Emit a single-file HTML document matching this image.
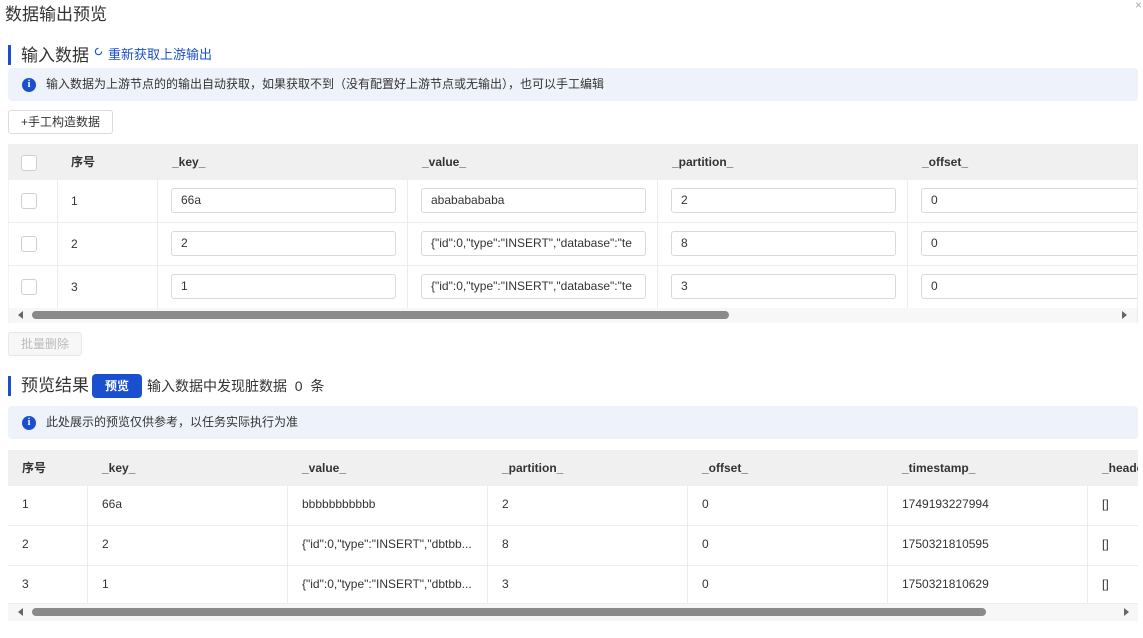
<!DOCTYPE html>
<html><head><meta charset="utf-8"><style>
*{box-sizing:border-box;margin:0;padding:0}
body{width:1143px;height:638px;overflow:hidden;background:#fff;font-family:"Liberation Sans","Noto Sans CJK SC",sans-serif;color:#333;position:relative;font-size:12px;line-height:1.2}
.a{position:absolute;white-space:nowrap;line-height:16px}
.bar{position:absolute;left:8px;width:3px;background:#1a4fd0}
.info{position:absolute;left:8px;width:1130px;height:33px;background:#eef3fb;border-radius:4px}
.info i{position:absolute;left:14px;top:10px;width:14px;height:14px;border-radius:50%;background:#1a4fd0;color:#fff;font-style:normal;font-size:10px;font-weight:bold;text-align:center;line-height:14px;font-family:"Liberation Serif",serif}
.info span{position:absolute;left:38px;top:8px;font-size:12px;line-height:16px;color:#333}
.btn{position:absolute;border:1px solid #dcdcdc;border-radius:3px;font-size:12px;text-align:center}
.th{position:absolute;background:#f0f0f0;height:36px}
.cell{position:absolute;border-right:1px solid #ececec;border-bottom:1px solid #ececec}
.inp{position:absolute;height:25px;border:1px solid #d9d9d9;border-radius:3px;padding-left:9px;line-height:23px;font-size:12px;color:#333;overflow:hidden;white-space:nowrap}
.cb{position:absolute;width:16px;height:16px;border:1px solid #cfcfcf;border-radius:3px;background:#fff}
.h{font-weight:bold;color:#333;font-size:12px}
.t{font-size:17px;line-height:20px}
</style></head><body>
<div class="a t" style="left:5px;top:5px">数据输出预览</div>
<div class="a" style="left:1135px;top:-3px;font-size:12px;color:#aaa">×</div>

<div class="bar" style="top:45px;height:20px"></div>
<div class="a t" style="left:21px;top:46px">输入数据</div>
<svg class="a" style="left:94px;top:47px" width="9" height="9" viewBox="0 0 10 10"><path d="M8.5 5A3.5 3.5 0 1 1 5 1.5" fill="none" stroke="#1a4fd0" stroke-width="1.3"/></svg>
<div class="a" style="left:108px;top:47px;font-size:13px;color:#1a4fd0">重新获取上游输出</div>
<div class="info" style="top:68px"><i>i</i><span>输入数据为上游节点的的输出自动获取，如果获取不到（没有配置好上游节点或无输出），也可以手工编辑</span></div>
<div class="btn" style="left:8px;top:110px;width:105px;height:24px;line-height:22px">+手工构造数据</div>

<!-- table 1 -->
<div class="th" style="left:8px;top:144px;width:1130px"></div>
<div class="cb" style="left:21px;top:155px"></div>
<div class="a h" style="left:71px;top:154px">序号</div>
<div class="a h" style="left:172px;top:154px">_key_</div>
<div class="a h" style="left:422px;top:154px">_value_</div>
<div class="a h" style="left:672px;top:154px">_partition_</div>
<div class="a h" style="left:922px;top:154px">_offset_</div>
<div style="position:absolute;left:8px;top:180px;width:1130px;height:143px;border-bottom:1px solid #ececec;border-left:1px solid #f3f3f3"></div>
<div class="a" style="left:1137px;top:144px;width:1px;height:179px;background:#ececec"></div>

<div style="position:absolute;left:8px;top:180px;width:1129px;height:128px;overflow:hidden">
 <div class="cell" style="left:0;top:0;width:50px;height:43px"></div><div class="cell" style="left:50px;top:0;width:100px;height:43px"></div><div class="cell" style="left:150px;top:0;width:250px;height:43px"></div><div class="cell" style="left:400px;top:0;width:250px;height:43px"></div><div class="cell" style="left:650px;top:0;width:250px;height:43px"></div><div class="cell" style="left:900px;top:0;width:250px;height:43px"></div>
 <div class="cell" style="left:0;top:43px;width:50px;height:43px"></div><div class="cell" style="left:50px;top:43px;width:100px;height:43px"></div><div class="cell" style="left:150px;top:43px;width:250px;height:43px"></div><div class="cell" style="left:400px;top:43px;width:250px;height:43px"></div><div class="cell" style="left:650px;top:43px;width:250px;height:43px"></div><div class="cell" style="left:900px;top:43px;width:250px;height:43px"></div>
 <div class="cell" style="left:0;top:86px;width:50px;height:42px;border-bottom:0"></div><div class="cell" style="left:50px;top:86px;width:100px;height:42px;border-bottom:0"></div><div class="cell" style="left:150px;top:86px;width:250px;height:42px;border-bottom:0"></div><div class="cell" style="left:400px;top:86px;width:250px;height:42px;border-bottom:0"></div><div class="cell" style="left:650px;top:86px;width:250px;height:42px;border-bottom:0"></div><div class="cell" style="left:900px;top:86px;width:250px;height:42px;border-bottom:0"></div>

 <div class="cb" style="left:13px;top:13px"></div><div class="a" style="left:63px;top:13px">1</div>
 <div class="inp" style="left:163px;top:8px;width:225px">66a</div><div class="inp" style="left:413px;top:8px;width:225px">abababababa</div><div class="inp" style="left:663px;top:8px;width:225px">2</div><div class="inp" style="left:913px;top:8px;width:240px">0</div>
 <div class="cb" style="left:13px;top:56px"></div><div class="a" style="left:63px;top:56px">2</div>
 <div class="inp" style="left:163px;top:51px;width:225px">2</div><div class="inp" style="left:413px;top:51px;width:225px">{"id":0,"type":"INSERT","database":"te</div><div class="inp" style="left:663px;top:51px;width:225px">8</div><div class="inp" style="left:913px;top:51px;width:240px">0</div>
 <div class="cb" style="left:13px;top:99px"></div><div class="a" style="left:63px;top:99px">3</div>
 <div class="inp" style="left:163px;top:94px;width:225px">1</div><div class="inp" style="left:413px;top:94px;width:225px">{"id":0,"type":"INSERT","database":"te</div><div class="inp" style="left:663px;top:94px;width:225px">3</div><div class="inp" style="left:913px;top:94px;width:240px">0</div>
</div>
<div class="a" style="left:9px;top:308px;width:1128px;height:15px;background:#f7f7f7"></div>
<div class="a" style="left:18px;top:311px;width:0;height:0;border-top:4px solid transparent;border-bottom:4px solid transparent;border-right:5px solid #666"></div>
<div class="a" style="left:32px;top:311px;width:697px;height:8px;border-radius:4px;background:#8a8a8a"></div>
<div class="a" style="left:1122px;top:311px;width:0;height:0;border-top:4px solid transparent;border-bottom:4px solid transparent;border-left:5px solid #666"></div>

<div class="btn" style="left:8px;top:332px;width:74px;height:24px;line-height:22px;color:#bbb;background:#f7f7f7;border-color:#e8e8e8">批量删除</div>

<div class="bar" style="top:376px;height:20px"></div>
<div class="a t" style="left:21px;top:376px">预览结果</div>
<div class="a" style="left:92px;top:374px;width:50px;height:24px;border-radius:4px;background:#1a4fd0;color:#fff;text-align:center;line-height:24px;font-size:12px;font-weight:bold">预览</div>
<div class="a" style="left:147px;top:377px;font-size:14px;line-height:18px">输入数据中发现脏数据&nbsp;&nbsp;0&nbsp;&nbsp;条</div>
<div class="info" style="top:406px"><i>i</i><span>此处展示的预览仅供参考，以任务实际执行为准</span></div>

<!-- table 2 -->
<div class="th" style="left:8px;top:450px;width:1130px"></div>
<div class="a h" style="left:22px;top:460px">序号</div>
<div class="a h" style="left:102px;top:460px">_key_</div>
<div class="a h" style="left:302px;top:460px">_value_</div>
<div class="a h" style="left:502px;top:460px">_partition_</div>
<div class="a h" style="left:702px;top:460px">_offset_</div>
<div class="a h" style="left:902px;top:460px">_timestamp_</div>
<div class="a h" style="left:1102px;top:460px;width:36px;overflow:hidden">_header_</div>
<div style="position:absolute;left:8px;top:486px;width:1130px;height:118px;overflow:hidden">
 <div class="cell" style="left:0;top:0;width:80px;height:40px"></div><div class="cell" style="left:80px;top:0;width:200px;height:40px"></div><div class="cell" style="left:280px;top:0;width:200px;height:40px"></div><div class="cell" style="left:480px;top:0;width:200px;height:40px"></div><div class="cell" style="left:680px;top:0;width:200px;height:40px"></div><div class="cell" style="left:880px;top:0;width:200px;height:40px"></div><div class="cell" style="left:1080px;top:0;width:200px;height:40px"></div>
 <div class="cell" style="left:0;top:40px;width:80px;height:40px"></div><div class="cell" style="left:80px;top:40px;width:200px;height:40px"></div><div class="cell" style="left:280px;top:40px;width:200px;height:40px"></div><div class="cell" style="left:480px;top:40px;width:200px;height:40px"></div><div class="cell" style="left:680px;top:40px;width:200px;height:40px"></div><div class="cell" style="left:880px;top:40px;width:200px;height:40px"></div><div class="cell" style="left:1080px;top:40px;width:200px;height:40px"></div>
 <div class="cell" style="left:0;top:80px;width:80px;height:38px"></div><div class="cell" style="left:80px;top:80px;width:200px;height:38px"></div><div class="cell" style="left:280px;top:80px;width:200px;height:38px"></div><div class="cell" style="left:480px;top:80px;width:200px;height:38px"></div><div class="cell" style="left:680px;top:80px;width:200px;height:38px"></div><div class="cell" style="left:880px;top:80px;width:200px;height:38px"></div><div class="cell" style="left:1080px;top:80px;width:200px;height:38px"></div>
 <div class="a" style="left:14px;top:10px">1</div><div class="a" style="left:94px;top:10px">66a</div><div class="a" style="left:294px;top:10px">bbbbbbbbbbb</div><div class="a" style="left:494px;top:10px">2</div><div class="a" style="left:694px;top:10px">0</div><div class="a" style="left:894px;top:10px">1749193227994</div><div class="a" style="left:1094px;top:10px">[]</div>
 <div class="a" style="left:14px;top:50px">2</div><div class="a" style="left:94px;top:50px">2</div><div class="a" style="left:294px;top:50px">{"id":0,"type":"INSERT","dbtbb...</div><div class="a" style="left:494px;top:50px">8</div><div class="a" style="left:694px;top:50px">0</div><div class="a" style="left:894px;top:50px">1750321810595</div><div class="a" style="left:1094px;top:50px">[]</div>
 <div class="a" style="left:14px;top:90px">3</div><div class="a" style="left:94px;top:90px">1</div><div class="a" style="left:294px;top:90px">{"id":0,"type":"INSERT","dbtbb...</div><div class="a" style="left:494px;top:90px">3</div><div class="a" style="left:694px;top:90px">0</div><div class="a" style="left:894px;top:90px">1750321810629</div><div class="a" style="left:1094px;top:90px">[]</div>
</div>
<div class="a" style="left:8px;top:604px;width:1130px;height:17px;background:#f7f7f7"></div>
<div class="a" style="left:18px;top:608px;width:0;height:0;border-top:4px solid transparent;border-bottom:4px solid transparent;border-right:5px solid #666"></div>
<div class="a" style="left:32px;top:608px;width:954px;height:8px;border-radius:4px;background:#8a8a8a"></div>
<div class="a" style="left:1124px;top:608px;width:0;height:0;border-top:4px solid transparent;border-bottom:4px solid transparent;border-left:5px solid #666"></div>
</body></html>
